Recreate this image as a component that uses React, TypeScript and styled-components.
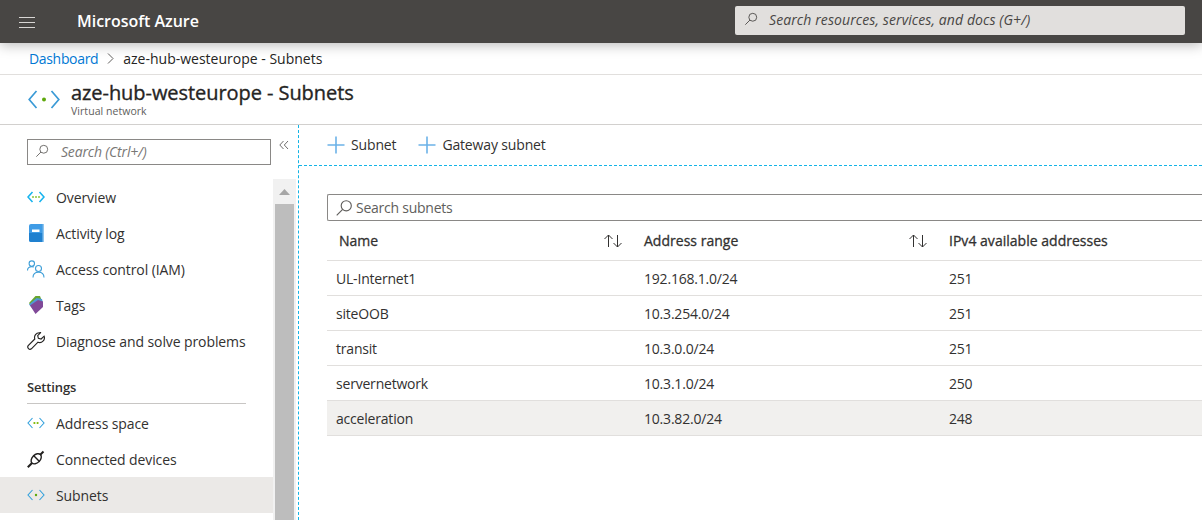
import * as React from 'react';
import styled, { createGlobalStyle } from 'styled-components';

const GlobalStyle = createGlobalStyle`
  html, body {
    margin: 0;
    padding: 0;
    background: #fff;
    overflow: hidden;
  }
  * {
    box-sizing: border-box;
  }
  body {
    font-family: "Open Sans", "Noto Sans", "Liberation Sans", sans-serif;
    font-size: 14px;
    color: #323130;
  }
`;

const Page = styled.div`
  width: 1202px;
  height: 520px;
  overflow: hidden;
  display: flex;
  flex-direction: column;
`;

const TopBar = styled.header`
  position: relative;
  z-index: 2;
  flex: 0 0 43px;
  height: 43px;
  background: #484644;
  box-shadow: 0 2px 12px rgba(0, 0, 0, 0.28);
  display: flex;
  align-items: center;
  padding: 0 0 0 19px;
`;

const Brand = styled.div`
  margin-left: 42px;
  width: 658px;
  padding-bottom: 1px;
  color: #fff;
  font-size: 16px;
  font-weight: 600;
  letter-spacing: -0.02px;
`;

const GlobalSearch = styled.div`
  width: 450px;
  height: 29px;
  margin-bottom: 3px;
  background: #e1dfdd;
  border-radius: 2px;
  display: flex;
  align-items: center;
  gap: 11px;
  padding: 0 0 2px 9px;
  font-style: italic;
  font-size: 14px;
  letter-spacing: 0.1px;
  color: #484644;
`;

const Breadcrumb = styled.nav`
  flex: 0 0 32px;
  border-bottom: 1px solid #e1dfdd;
  display: flex;
  align-items: center;
  padding-left: 29px;
  color: #252423;
`;

const CrumbLink = styled.span`
  color: #0078d4;
  letter-spacing: -0.33px;
`;

const CrumbSep = styled.svg`
  margin: 0 9px 0 9px;
`;

const TitleBar = styled.div`
  flex: 0 0 50px;
  border-bottom: 1px solid #d2d0ce;
  display: flex;
  align-items: center;
  padding-left: 28px;
  gap: 11px;
`;

const TitleText = styled.div`
  display: flex;
  flex-direction: column;
  margin-top: -2px;
`;

const Title = styled.h1`
  margin: 0;
  font-size: 20px;
  line-height: 24px;
  font-weight: 400;
  -webkit-text-stroke: 0.35px #252423;
  letter-spacing: -0.06px;
  color: #252423;
`;

const Subtitle = styled.div`
  font-size: 10.5px;
  line-height: 12px;
  letter-spacing: 0.05px;
  color: #605e5c;
`;

const Body = styled.div`
  flex: 1;
  min-height: 0;
  display: flex;
`;

const Sidebar = styled.aside`
  flex: 0 0 298px;
  display: flex;
  flex-direction: column;
  min-height: 0;
`;

const SidebarTop = styled.div`
  flex: 0 0 54px;
  display: flex;
  align-items: flex-start;
  padding: 14px 0 0 27px;
`;

const SidebarSearch = styled.div`
  width: 244px;
  height: 26px;
  border: 1px solid #8a8886;
  display: flex;
  align-items: center;
  gap: 12px;
  padding: 0 0 2px 7px;
  font-style: italic;
  font-size: 14px;
  letter-spacing: -0.18px;
  color: #797775;
`;

const Collapse = styled.svg`
  margin: 1px 0 0 8px;
`;

const SidebarBody = styled.div`
  flex: 1;
  min-height: 0;
  display: flex;
`;

const Menu = styled.div`
  flex: 0 0 273px;
`;

const MenuItem = styled.div<{ $active?: boolean }>`
  height: 36px;
  display: flex;
  align-items: center;
  padding-left: 27px;
  gap: 11px;
  letter-spacing: -0.1px;
  color: #323130;
  background: ${(props) => (props.$active ? '#ebe9e7' : 'transparent')};
`;

const MenuIcon = styled.span`
  flex: 0 0 18px;
  height: 18px;
  display: flex;
  align-items: center;
  justify-content: center;
`;

const MenuHeading = styled.div`
  margin: 10px 27px 1px;
  height: 35px;
  display: flex;
  align-items: center;
  border-bottom: 1px solid #c8c6c4;
  padding-top: 2px;
  font-size: 13px;
  font-weight: 600;
  letter-spacing: -0.15px;
  color: #323130;
`;

const ScrollBar = styled.div`
  flex: 0 0 23px;
  padding: 0 2px;
  background: #f1f1f1;
  display: flex;
  flex-direction: column;
`;

const ScrollUp = styled.div`
  flex: 0 0 25px;
  display: flex;
  align-items: center;
  justify-content: center;
`;

const ScrollThumb = styled.div`
  flex: 1;
  background: #bdbdbd;
`;

const Main = styled.main`
  flex: 1;
  min-width: 0;
  border-left: 1px dashed #14b4e6;
  display: flex;
  flex-direction: column;
`;

const Toolbar = styled.div`
  flex: 0 0 41px;
  border-bottom: 1px dashed #14b4e6;
  display: flex;
  align-items: center;
  padding: 0 0 1px 28px;
  gap: 22px;
`;

const ToolButton = styled.div`
  display: flex;
  align-items: center;
  gap: 6px;
  letter-spacing: -0.15px;
  color: #323130;
`;

const Content = styled.div`
  flex: 1;
  padding: 28px 0 0 28px;
`;

const TableSearch = styled.div`
  height: 27px;
  border: 1px solid #8a8886;
  border-right: none;
  border-radius: 2px 0 0 2px;
  display: flex;
  align-items: center;
  gap: 3px;
  padding-left: 7px;
  letter-spacing: -0.25px;
  color: #605e5c;
`;

const Row = styled.div<{ $header?: boolean; $selected?: boolean }>`
  display: grid;
  grid-template-columns: 305px 305px 1fr;
  height: ${(props) => (props.$header ? '40px' : '35px')};
  border-bottom: 1px solid #e1dfdd;
  align-items: center;
  padding-left: ${(props) => (props.$header ? '12px' : '9px')};
  background: ${(props) => (props.$selected ? '#f1f0ee' : 'transparent')};
  letter-spacing: -0.2px;
  color: #323130;
`;

const HeaderCell = styled.div`
  display: flex;
  align-items: center;
  justify-content: space-between;
  -webkit-text-stroke: 0.3px #323130;
  letter-spacing: 0.02px;
  color: #323130;
  padding-right: 21px;
`;

const AddressCell = styled.div`
  margin-left: 3px;
`;

const MagnifierIcon = ({ size = 16, color = '#605e5c' }: { size?: number; color?: string }) => (
  <svg width={size} height={size} viewBox="0 0 16 16" fill="none" stroke={color} strokeWidth="1">
    <circle cx="10" cy="6" r="4.5" />
    <path d="M6.8 9.2 1.5 14.5" />
  </svg>
);

const PlusIcon = () => (
  <svg width="18" height="18" viewBox="0 0 18 18" stroke="#6cb2e8" strokeWidth="1.6">
    <path d="M9 0.5v17M0.5 9h17" />
  </svg>
);

const SortIcon = () => (
  <svg width="20" height="14" viewBox="0 0 20 14" fill="none" stroke="#323130" strokeWidth="1">
    <path d="M5.5 13V1M1.5 5l4-4 4 4" />
    <path d="M14.5 1v12M10.5 9l4 4 4-4" />
  </svg>
);

const VnetIcon = ({ dots = 1, color = '#32a0dc', weight = 1.1 }: { dots?: number; color?: string; weight?: number }) => (
  <svg width="18" height="12" viewBox="0 0 18 12" fill="none">
    <path d="M5.500 1 1 6l4.500 5M12.500 1 17 6l-4.500 5" stroke={color} strokeWidth={weight} />
    {dots === 1 && <circle cx="9" cy="6" r="1.200" fill="#5ea80c" />}
    {dots === 2 && (
      <>
        <circle cx="7.400" cy="6" r="1.100" fill="#7ab800" />
        <circle cx="10.600" cy="6" r="1.100" fill="#7ab800" />
      </>
    )}
    {dots === 3 && (
      <>
        <circle cx="6" cy="6" r="1" fill="#8cc63f" />
        <circle cx="9" cy="6" r="1" fill="#8cc63f" />
        <circle cx="12" cy="6" r="1" fill="#8cc63f" />
      </>
    )}
  </svg>
);

const BookIcon = () => (
  <svg width="15" height="18" viewBox="0 0 15 18">
    <path d="M0 2A2 2 0 0 1 2 0h13v18H2a2 2 0 0 1-2-2Z" fill="#3f9ce6" />
    <path d="M0 9h13.500V0H15v18H2a2 2 0 0 1-2-2Z" fill="#1f80cf" />
    <path d="M13.500 0H15v18h-1.500z" fill="#8fc6ef" />
    <path d="M3 5.500h7.500v2.500H3z" fill="#fff" />
  </svg>
);

const PeopleIcon = () => (
  <svg width="18" height="18" viewBox="0 0 18 18" fill="none" stroke="#3f9fd8" strokeWidth="1.100">
    <circle cx="4.800" cy="3.600" r="2.700" />
    <path d="M0.500 10.500c0-2.300 1.700-3.900 4.300-3.900 .8 0 1.500.2 2.100.5" />
    <circle cx="11.500" cy="8.500" r="3" />
    <path d="M6 17.500c0-3.200 2.300-5.300 5.500-5.300s5.500 2.100 5.500 5.300" />
  </svg>
);

const TagIcon = () => (
  <svg width="16" height="18" viewBox="0 0 16 18">
    <path d="M1 7 7.500 0H12l1.500 4L5 13Z" fill="#68a52f" />
    <path d="M1 8.500 8.500 2 14 3l1 4-8 8Z" fill="#4f9ad4" />
    <path d="M2 9.500 10 4l5 1.500V11l-7.500 7Z" fill="#804998" />
  </svg>
);

const WrenchIcon = () => (
  <svg width="18" height="18" viewBox="0 0 18 18" fill="none" stroke="#252423" strokeWidth="1.150">
    <path d="M12.500 0.800a4.700 4.700 0 0 0-4.700 6.200L1.200 13.600a2.300 2.300 0 0 0 3.200 3.200l6.600-6.600a4.700 4.700 0 0 0 6.100-6l-3 2.800-2.700-.7-.7-2.700 2.900-2.900a4.700 4.700 0 0 0-.100-.2Z" />
  </svg>
);

const PlugIcon = () => (
  <svg width="18" height="18" viewBox="0 0 18 18" fill="none" stroke="#201f1e" strokeWidth="1.400">
    <ellipse cx="9.200" cy="8.800" rx="6" ry="4" transform="rotate(-45 9.200 8.800)" />
    <path d="M6.300 5.300 12.700 11.700" />
    <path d="M13 5 16.500 1.500" strokeWidth="2" />
    <path d="M5 13 0.800 17.200" strokeWidth="2" />
  </svg>
);

const primaryItems = [
  { label: 'Overview', icon: <VnetIcon dots={3} color="#18b4ee" weight={1.6} /> },
  { label: 'Activity log', icon: <BookIcon /> },
  { label: 'Access control (IAM)', icon: <PeopleIcon /> },
  { label: 'Tags', icon: <TagIcon /> },
  { label: 'Diagnose and solve problems', icon: <WrenchIcon /> },
];

const subnets = [
  { name: 'UL-Internet1', range: '192.168.1.0/24', free: 251 },
  { name: 'siteOOB', range: '10.3.254.0/24', free: 251 },
  { name: 'transit', range: '10.3.0.0/24', free: 251 },
  { name: 'servernetwork', range: '10.3.1.0/24', free: 250 },
  { name: 'acceleration', range: '10.3.82.0/24', free: 248 },
];

const App = (): JSX.Element => {
  return (
    <Page>
      <GlobalStyle />
      <TopBar>
        <svg width="16" height="12" viewBox="0 0 16 12" stroke="#d8d6d4" strokeWidth="1">
          <path d="M0 1.500h16M0 6.500h16M0 11.500h16" />
        </svg>
        <Brand>Microsoft Azure</Brand>
        <GlobalSearch>
          <MagnifierIcon size={14} color="#484644" />
          Search resources, services, and docs (G+/)
        </GlobalSearch>
      </TopBar>
      <Breadcrumb>
        <CrumbLink>Dashboard</CrumbLink>
        <CrumbSep width="7" height="11" viewBox="0 0 7 11" fill="none" stroke="#605e5c">
          <path d="M1 0.500 6 5.500 1 10.500" />
        </CrumbSep>
        aze-hub-westeurope - Subnets
      </Breadcrumb>
      <TitleBar>
        <svg width="32" height="19" viewBox="0 0 32 19" fill="none">
          <path d="M8.500 1 1.200 9.500l7.300 8.500M23.500 1l7.300 8.500-7.300 8.500" stroke="#3a9ad6" strokeWidth="1.700" />
          <circle cx="16" cy="9.500" r="2" fill="#5ea80c" />
        </svg>
        <TitleText>
          <Title>aze-hub-westeurope - Subnets</Title>
          <Subtitle>Virtual network</Subtitle>
        </TitleText>
      </TitleBar>
      <Body>
        <Sidebar>
          <SidebarTop>
            <SidebarSearch>
              <MagnifierIcon size={14} />
              Search (Ctrl+/)
            </SidebarSearch>
            <Collapse width="10" height="10" viewBox="0 0 10 10" fill="none" stroke="#605e5c" strokeWidth="0.900">
              <path d="M4.500 1 0.800 5l3.700 4M9 1 5.300 5 9 9" />
            </Collapse>
          </SidebarTop>
          <SidebarBody>
            <Menu>
              {primaryItems.map((item) => (
                <MenuItem key={item.label}>
                  <MenuIcon>{item.icon}</MenuIcon>
                  {item.label}
                </MenuItem>
              ))}
              <MenuHeading>Settings</MenuHeading>
              <MenuItem>
                <MenuIcon>
                  <VnetIcon dots={2} />
                </MenuIcon>
                Address space
              </MenuItem>
              <MenuItem>
                <MenuIcon>
                  <PlugIcon />
                </MenuIcon>
                Connected devices
              </MenuItem>
              <MenuItem $active>
                <MenuIcon>
                  <VnetIcon />
                </MenuIcon>
                Subnets
              </MenuItem>
            </Menu>
            <ScrollBar>
              <ScrollUp>
                <svg width="11" height="6" viewBox="0 0 11 6">
                  <path d="M5.500 0 11 6H0Z" fill="#a6a6a6" />
                </svg>
              </ScrollUp>
              <ScrollThumb />
            </ScrollBar>
          </SidebarBody>
        </Sidebar>
        <Main>
          <Toolbar>
            <ToolButton>
              <PlusIcon />
              Subnet
            </ToolButton>
            <ToolButton>
              <PlusIcon />
              Gateway subnet
            </ToolButton>
          </Toolbar>
          <Content>
            <TableSearch>
              <MagnifierIcon size={18} />
              Search subnets
            </TableSearch>
            <Row $header>
              <HeaderCell>
                Name
                <SortIcon />
              </HeaderCell>
              <HeaderCell>
                Address range
                <SortIcon />
              </HeaderCell>
              <HeaderCell>IPv4 available addresses</HeaderCell>
            </Row>
            {subnets.map((subnet) => (
              <Row key={subnet.name} $selected={subnet.name === 'acceleration'}>
                <div>{subnet.name}</div>
                <AddressCell>{subnet.range}</AddressCell>
                <AddressCell>{subnet.free}</AddressCell>
              </Row>
            ))}
          </Content>
        </Main>
      </Body>
    </Page>
  );
};

export default App;
